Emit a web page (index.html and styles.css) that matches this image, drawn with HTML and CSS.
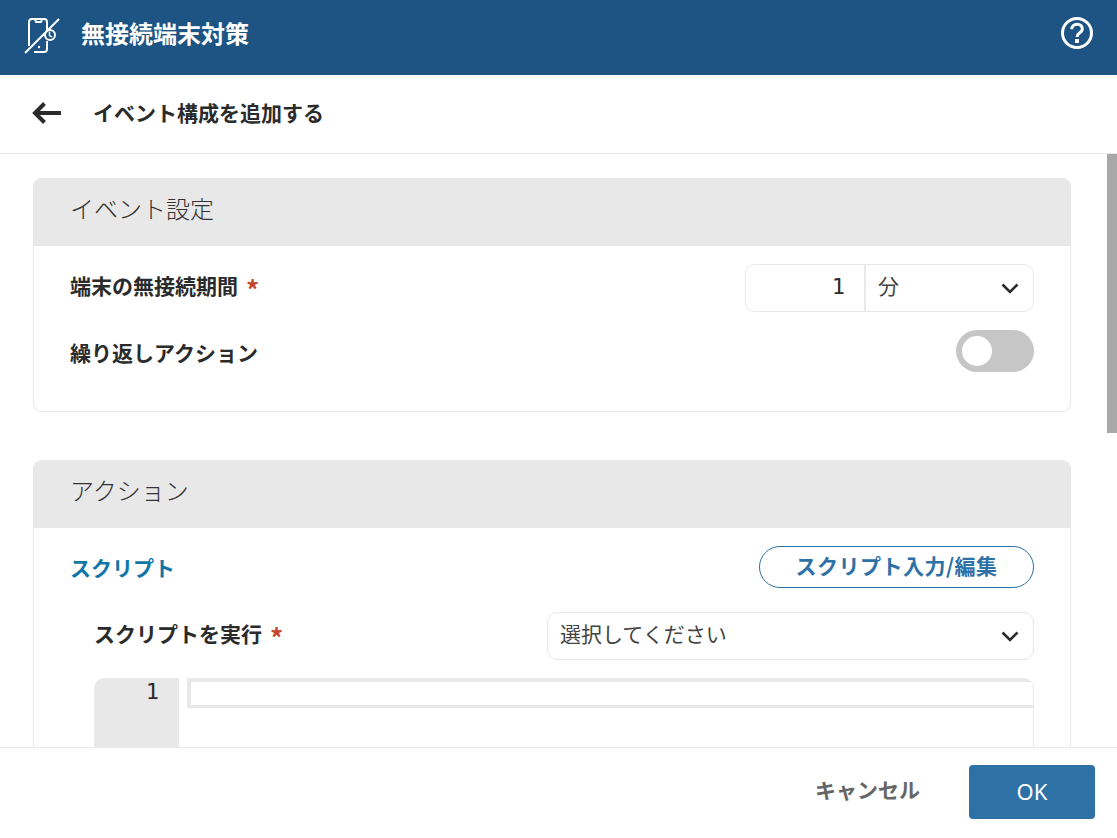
FILE: index.html
```html
<!DOCTYPE html>
<html lang="ja">
<head>
    <meta charset="UTF-8">
    <title>無接続端末対策</title>
    <link rel="stylesheet" href="styles.css">
</head>
<body>
    <div class="app">
        <header class="topbar">
            <div class="topbar-title">
                <svg class="topbar-icon" width="36" height="36" viewBox="0 0 36 36" fill="none" stroke="#fff" stroke-width="2">
                    <path d="M5 28V4a3 3 0 0 1 3-3h12a3 3 0 0 1 3 3v8"/>
                    <path d="M23 23v8a3 3 0 0 1-3 3H10"/>
                    <path d="M11 1.500l1 2.500h5l1-2.500"/>
                    <path d="M1 35L35 1"/>
                    <circle cx="26" cy="17" r="5"/>
                    <path d="M25.500 13.500v4l2.500 1.500" stroke-width="1.400"/>
                    <circle cx="15" cy="29" r="1.200" fill="#fff" stroke="none"/>
                </svg>
                <h1>無接続端末対策</h1>
            </div>
            <svg class="help-icon" width="34" height="34" viewBox="0 0 34 34" fill="none" stroke="#fff" stroke-width="3">
                <circle cx="17" cy="17" r="14.500"/>
                <path d="M11.800 13.200c0-3 2.300-5 5.300-5s5.200 1.900 5.200 4.600c0 2.200-1.200 3.200-2.800 4.300-1.600 1.100-2.400 2-2.400 3.900"/>
                <rect x="15" y="23" width="4" height="4" fill="#fff" stroke="none"/>
            </svg>
        </header>

        <div class="subbar">
            <svg class="back-icon" width="30" height="24" viewBox="0 0 30 24" fill="none" stroke="#2b2b2b" stroke-width="4">
                <path d="M29 12H3"/>
                <path d="M12.500 2.500L3 12l9.500 9.500"/>
            </svg>
            <h2>イベント構成を追加する</h2>
        </div>

        <div class="scroller">
            <main class="content">
                <section class="card">
                    <h3 class="card-head">イベント設定</h3>
                    <div class="card-body settings">
                        <div class="row row-period">
                            <label class="label">端末の無接続期間<span class="req">*</span></label>
                            <div class="field-group">
                                <div class="num-input">1</div>
                                <div class="unit-select">
                                    <span>分</span>
                                    <svg class="chevron" width="18" height="11" viewBox="0 0 18 11" fill="none" stroke="#2b2b2b" stroke-width="2.600"><path d="M1.500 1.500L9 9l7.500-7.500"/></svg>
                                </div>
                            </div>
                        </div>
                        <div class="row row-repeat">
                            <label class="label">繰り返しアクション</label>
                            <div class="toggle"><span class="knob"></span></div>
                        </div>
                    </div>
                </section>

                <section class="card">
                    <h3 class="card-head">アクション</h3>
                    <div class="card-body actions">
                        <div class="row row-script">
                            <span class="script-title">スクリプト</span>
                            <button class="btn-outline">スクリプト入力/編集</button>
                        </div>
                        <div class="indent">
                            <div class="row row-run">
                                <label class="label">スクリプトを実行<span class="req">*</span></label>
                                <div class="run-select">
                                    <span>選択してください</span>
                                    <svg class="chevron" width="18" height="11" viewBox="0 0 18 11" fill="none" stroke="#2b2b2b" stroke-width="2.600"><path d="M1.500 1.500L9 9l7.500-7.500"/></svg>
                                </div>
                            </div>
                            <div class="editor">
                                <div class="gutter">1</div>
                                <div class="code"><div class="active-line"></div></div>
                            </div>
                        </div>
                    </div>
                </section>
            </main>
            <div class="scroll-thumb"></div>
        </div>

        <footer class="footer">
            <button class="btn-cancel">キャンセル</button>
            <button class="btn-ok">OK</button>
        </footer>
    </div>
</body>
</html>
```
FILE: styles.css
```css
* {
    box-sizing: border-box;
}

html, body {
    height: 100%;
}

body {
    margin: 0;
    font-family: "Noto Sans CJK JP", "Noto Sans", sans-serif;
    color: #2b2b2b;
    background-color: #fff;
}

.app {
    display: flex;
    flex-direction: column;
    height: 838px;
    overflow: hidden;
}

.topbar {
    flex: none;
    display: flex;
    align-items: center;
    justify-content: space-between;
    height: 75px;
    padding: 0 23px 9px 24px;
    background-color: #1d5484;
}

.topbar-title {
    display: flex;
    align-items: center;
}

.topbar-icon {
    margin-right: 21px;
    margin-top: 5px;
}

.topbar h1 {
    margin: 0;
    font-size: 24px;
    font-weight: 700;
    color: #fff;
    line-height: 32px;
}

.subbar {
    flex: none;
    display: flex;
    align-items: center;
    height: 79px;
    padding: 0 0 4px 32px;
    border-bottom: 1px solid #e8e8e8;
}

.back-icon {
    margin-right: 31px;
    margin-top: 2px;
}

.subbar h2 {
    margin: 0;
    font-size: 21px;
    font-weight: 700;
    line-height: 30px;
}

.scroller {
    flex: 1;
    position: relative;
    overflow: hidden;
}

.scroll-thumb {
    position: absolute;
    top: 0;
    right: 0;
    width: 10px;
    height: 279px;
    background-color: #a8a8a8;
}

.content {
    padding: 24px 46px 40px 33px;
}

.card {
    border: 1px solid #e8e8e8;
    border-radius: 8px;
    margin-bottom: 48px;
    overflow: hidden;
}

.card-head {
    margin: 0;
    height: 67px;
    padding: 0 36px;
    background-color: #e8e8e8;
    font-size: 24px;
    font-weight: 300;
    line-height: 58px;
    color: #333;
}

.row {
    display: flex;
    align-items: center;
    justify-content: space-between;
}

.card-body {
    padding: 18px 36px 0;
}

.settings {
    height: 165px;
}

.label {
    font-size: 21px;
    font-weight: 700;
    line-height: 30px;
}

.req {
    margin-left: 8px;
    font-size: 26px;
    line-height: 0;
    vertical-align: -6px;
    color: #c8452c;
}

.row-period {
    height: 48px;
}

.row-period .label, .row-run .label {
    padding-bottom: 6px;
}

.field-group {
    display: flex;
    width: 289px;
    height: 48px;
    border: 1px solid #e8e8e8;
    border-radius: 10px;
}

.num-input {
    width: 120px;
    padding-right: 19px;
    border-right: 2px solid #e8e8e8;
    font-family: "DejaVu Sans Mono", monospace;
    font-size: 22px;
    line-height: 43px;
    text-align: right;
}

.unit-select, .run-select {
    flex: 1;
    display: flex;
    align-items: center;
    justify-content: space-between;
    padding: 0 14px 0 12px;
    font-size: 21px;
    color: #444;
}

.unit-select span, .run-select span {
    margin-top: -6px;
}

.row-repeat {
    height: 42px;
    margin-top: 18px;
}

.row-repeat .label {
    padding-top: 2px;
}

.toggle {
    width: 78px;
    height: 42px;
    padding: 6px;
    border-radius: 21px;
    background-color: #c6c6c6;
}

.knob {
    display: block;
    width: 30px;
    height: 30px;
    border-radius: 50%;
    background-color: #fff;
}

.actions {
    height: 800px;
}

.row-script {
    height: 42px;
}

.script-title {
    font-size: 21px;
    font-weight: 700;
    color: #0f76a8;
}

.btn-outline {
    width: 275px;
    height: 42px;
    padding: 0 0 4px;
    border: 1px solid #2e71a6;
    border-radius: 21px;
    background: #fff;
    font-family: inherit;
    font-size: 21px;
    font-weight: 700;
    letter-spacing: 0.5px;
    color: #2e71a6;
}

.indent {
    padding-left: 24px;
}

.row-run {
    margin-top: 24px;
    height: 48px;
}

.run-select {
    flex: none;
    width: 487px;
    height: 48px;
    border: 1px solid #e8e8e8;
    border-radius: 10px;
}

.editor {
    display: flex;
    height: 300px;
    margin-top: 18px;
    border: 1px solid #e8e8e8;
    border-top: 0;
    border-left: 0;
    border-radius: 10px 10px 0 0;
    overflow: hidden;
}

.gutter {
    flex: none;
    width: 85px;
    padding-right: 20px;
    background-color: #e8e8e8;
    font-family: "DejaVu Sans Mono", monospace;
    font-size: 22px;
    line-height: 28px;
    text-align: right;
}

.code {
    flex: 1;
    padding-left: 8px;
}

.active-line {
    height: 30px;
    border: solid #e8e8e8;
    border-width: 4px 0 3px 4px;
}

.footer {
    flex: none;
    display: flex;
    align-items: center;
    justify-content: flex-end;
    height: 91px;
    padding: 0 22px 2px 0;
    border-top: 1px solid #e8e8e8;
    background-color: #fff;
}

.btn-cancel {
    margin-right: 49px;
    padding: 0 0 6px;
    border: none;
    background: none;
    font-family: inherit;
    font-size: 21px;
    font-weight: 700;
    color: #666;
}

.btn-ok {
    width: 126px;
    height: 54px;
    padding: 0 0 2px;
    border: none;
    border-radius: 4px;
    background-color: #2e71a6;
    font-family: "Noto Sans", sans-serif;
    font-size: 22px;
    color: #fff;
}
```
